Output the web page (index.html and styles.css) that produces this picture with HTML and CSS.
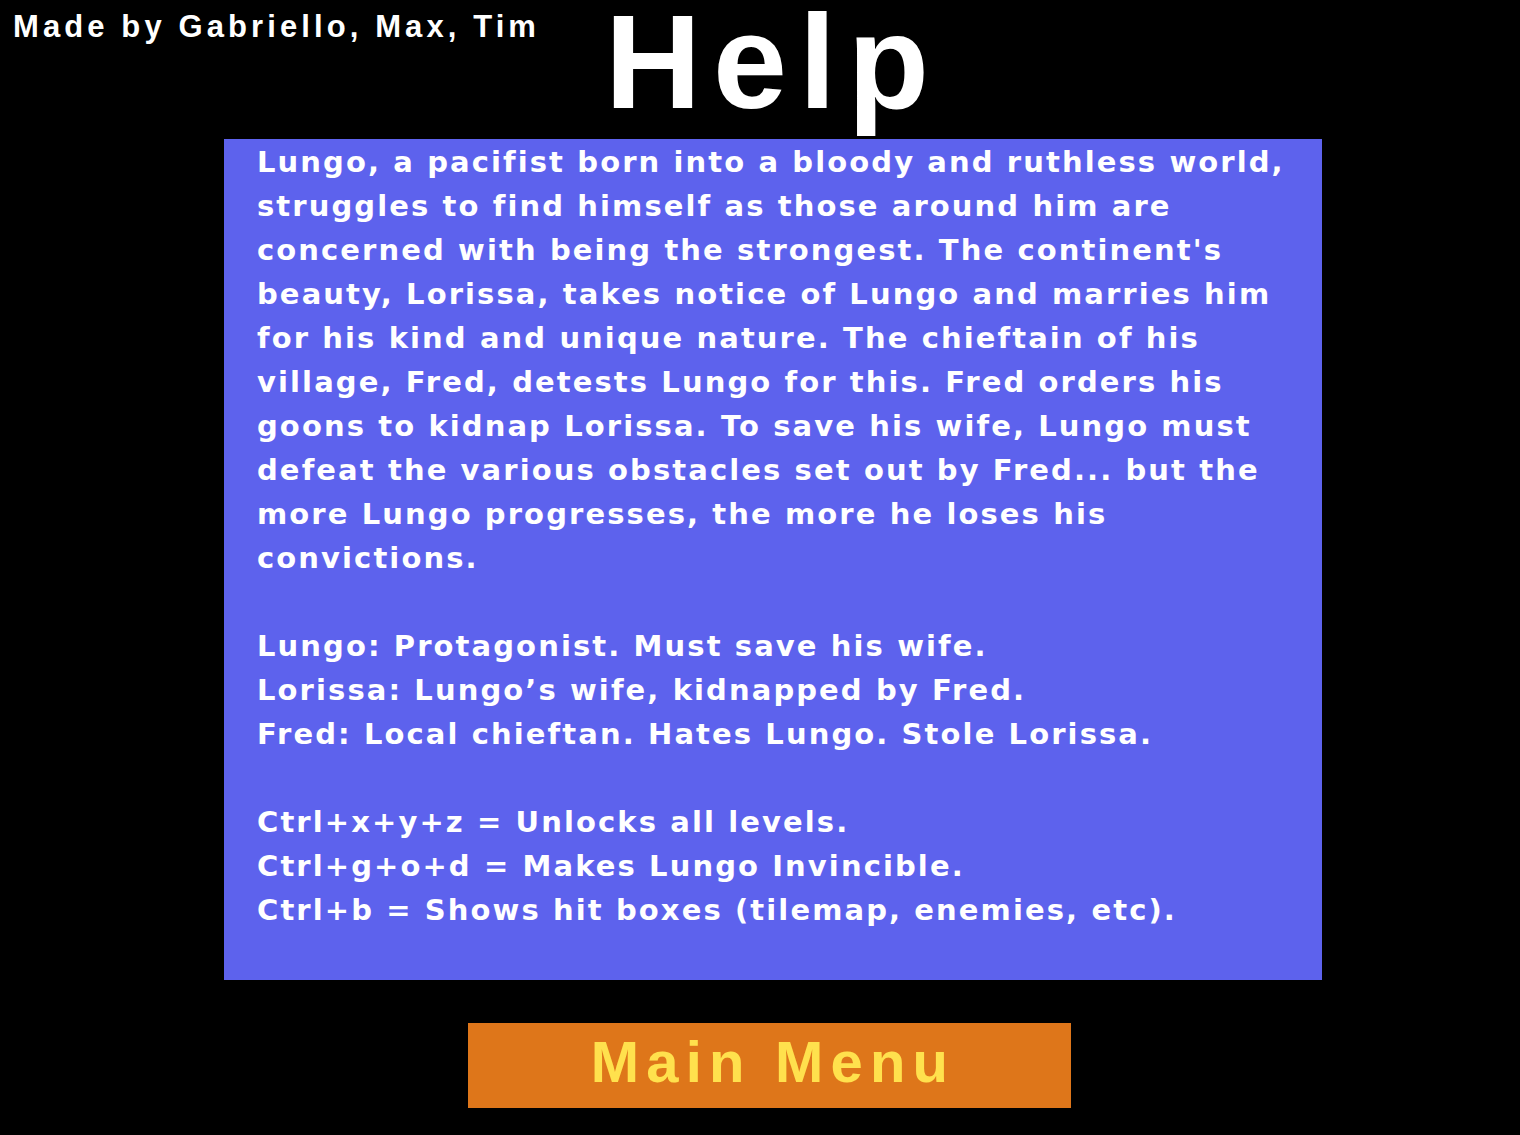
FILE: index.html
```html
<!DOCTYPE html>
<html lang="en">
<head>
<meta charset="utf-8">
<title>Help</title>
<link rel="stylesheet" href="styles.css">
</head>
<body>
<div class="page">
  <div class="credit">Made by Gabriello, Max, Tim</div>
  <h1 class="title">Help</h1>
  <div class="panel">
    <p class="para">Lungo, a pacifist born into a bloody and ruthless world, struggles to find himself as those around him are concerned with being the strongest. The continent's beauty, Lorissa, takes notice of Lungo and marries him for his kind and unique nature. The chieftain of his village, Fred, detests Lungo for this. Fred orders his goons to kidnap Lorissa. To save his wife, Lungo must defeat the various obstacles set out by Fred... but the more Lungo progresses, the more he loses his convictions.</p>
    <p class="para">Lungo: Protagonist. Must save his wife.<br>Lorissa: Lungo’s wife, kidnapped by Fred.<br>Fred: Local chieftan. Hates Lungo. Stole Lorissa.</p>
    <p class="para last">Ctrl+x+y+z = Unlocks all levels.<br>Ctrl+g+o+d = Makes Lungo Invincible.<br>Ctrl+b = Shows hit boxes (tilemap, enemies, etc).</p>
  </div>
  <button class="menu-btn" type="button">Main Menu</button>
</div>
</body>
</html>
```
FILE: styles.css
```css
html, body {
  margin: 0;
  padding: 0;
  background: #000;
}

body {
  width: 1520px;
  height: 1135px;
  overflow: hidden;
}

.page {
  display: grid;
  grid-template-columns: 224px 1098px;
  grid-template-rows: auto auto auto;
  align-items: start;
}

.credit {
  grid-column: 1;
  grid-row: 1;
  padding: 9px 0 0 13px;
  font-family: "Liberation Sans", Arial, sans-serif;
  font-weight: bold;
  font-size: 31px;
  line-height: 36px;
  letter-spacing: 4.1px;
  color: #fff;
  white-space: nowrap;
}

.title {
  grid-column: 2;
  grid-row: 1;
  margin: 0 0 14px 0;
  text-align: center;
  font-family: "Liberation Sans", Arial, sans-serif;
  font-weight: bold;
  font-size: 133px;
  line-height: 125px;
  letter-spacing: 12px;
  color: #fff;
}

.panel {
  grid-column: 2;
  grid-row: 2;
  background: #5d62ed;
  padding: 1px 14px 48px 33px;
  font-family: "DejaVu Sans", Verdana, sans-serif;
  font-weight: bold;
  font-size: 29px;
  line-height: 44px;
  letter-spacing: 2.1px;
  color: #fff;
}

.para {
  margin: 0 0 44px 0;
}

.para.last {
  margin-bottom: 0;
}

.menu-btn {
  grid-column: 2;
  grid-row: 3;
  justify-self: start;
  margin: 43px 0 0 244px;
  width: 603px;
  height: 85px;
  box-sizing: border-box;
  padding: 0 0 7px 7px;
  border: none;
  border-radius: 0;
  background: #de761a;
  color: #ffe14d;
  font-family: "Liberation Sans", Arial, sans-serif;
  font-weight: bold;
  font-size: 58px;
  line-height: 78px;
  letter-spacing: 7.2px;
  text-align: center;
  cursor: pointer;
}
```
